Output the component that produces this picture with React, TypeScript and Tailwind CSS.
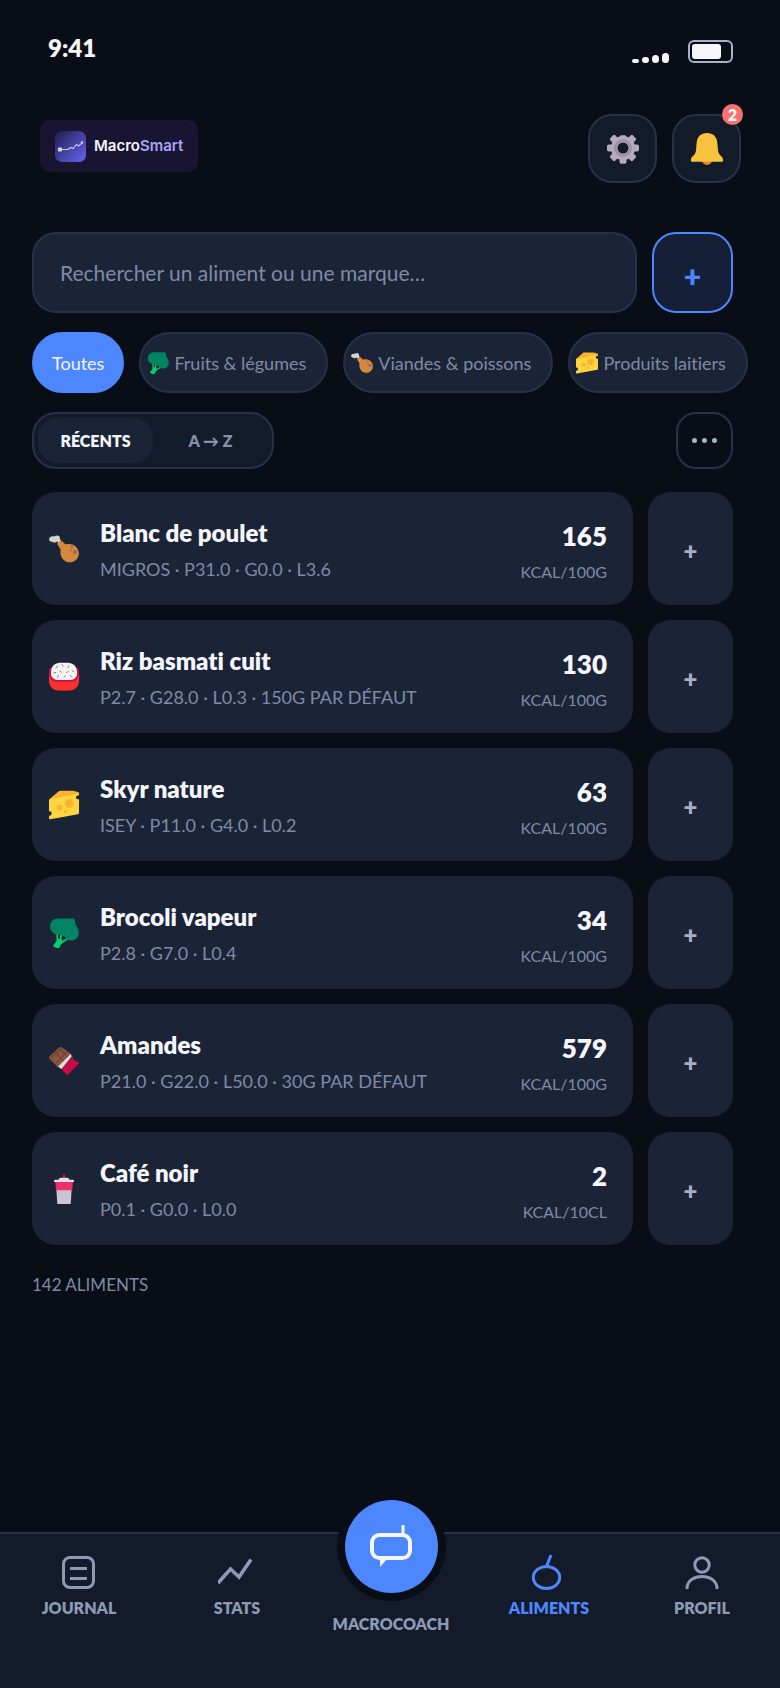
import { useState } from 'react'
import type { ReactNode } from 'react'

function GearIcon() {
  return (
    <svg viewBox="0 0 32 32" className="size-8" aria-hidden="true">
      <g fill="#b4acbc">
        <circle cx="16" cy="15" r="12" />
        <rect x="12.5" y="2.200" width="7" height="28.500" rx="1.8" />
        {[45, 90, 135].map((deg) => (
          <rect
            key={deg}
            x="12.5"
            y="-1"
            width="7"
            height="32"
            rx="1.8"
            transform={`rotate(${deg} 16 15)`}
          />
        ))}
      </g>
      <circle cx="16" cy="15" r="7.600" fill="#b4acbc" stroke="#998ea4" strokeWidth="2.400" />
      <circle cx="16" cy="15" r="5.500" fill="#131a29" />
    </svg>
  )
}

function BellIcon() {
  return (
    <svg viewBox="0 0 32 32" className="size-8" aria-hidden="true">
      <path d="M11 27a5 5 0 0 0 10 0z" fill="#f3802b" />
      <path
        d="M16 0c-6 0-9.800 3.600-10.300 9.500L5 17c-.2 2.600-1 4.200-2.700 5.700C.8 24 0 25 0 26.400V28c0 .5.4.8.9.8h30.200c.5 0 .9-.3.900-.8v-1.600c0-1.400-.8-2.400-2.300-3.700C28 21.200 27.200 19.600 27 17l-.7-7.500C25.800 3.600 22 0 16 0z"
        fill="#f9c23c"
      />
    </svg>
  )
}

function Chicken() {
  return (
    <svg viewBox="0 0 30 30" className="size-full" aria-hidden="true">
      <path d="M5 3.500l5 6 2-1.800-2-5z" fill="#e6e6e6" />
      <path
        d="M10.200 2.300C8.800 1 6.500 1.300 5.300 2.500 3 1.700.2 3.200.1 5.200c0 1.700 1.700 2.900 3.300 2.500 1.300 1.200 3.500 1.100 4.600-.2l2.200-2.400c.7-1 .8-2.100 0-2.800z"
        fill="#d3d3d3"
      />
      <path
        d="M8 9.400l3.700-3.300 5 4.300c3.300-1 7.300-.5 9.900 2 3.900 3.600 4.400 9.200 1.200 12.800-3.700 4.200-10 4-13.600.2-2.500-2.600-3.300-6.500-2.500-9.700z"
        fill="#d3883e"
      />
      <circle cx="26" cy="18" r="2.200" fill="#a56953" />
      <circle cx="22.900" cy="12.800" r="1.200" fill="#a56953" />
      <circle cx="21.900" cy="16.500" r=".9" fill="#a56953" />
    </svg>
  )
}

function Rice() {
  return (
    <svg viewBox="0 0 30 30" className="size-full" aria-hidden="true">
      <path d="M0 8.500C0 6 2 5 4 5h22c2 0 4 1 4 3.500V19c0 5-4 9.500-10 9.500H10C4 28.500 0 24 0 19z" fill="#ca0b4a" />
      <path d="M0 11c.5 6 3.500 8.500 8 8.500h14c4.500 0 7.500-2.500 8-8.500v7c0 6-4 10.500-10 10.500H10C4 28.500 0 24 0 18z" fill="#f8312f" />
      <path d="M2 10c0-5.500 4-9.300 9-9.300h8c5 0 9 3.800 9 9.300v1.500c0 4-3 6.500-7 6.500H9c-4 0-7-2.500-7-6.500z" fill="#f4f4f4" />
      <path
        d="M7 6l1.600-2M13 2.500l1 1.700M19 5.800l.8-1.900M4.500 11l2.200-.5M11 9l1.600 1.500M17.500 10.500l1.800-1M23 8.500l1.800 1.400M8.500 15.500l1-2M15 15l1.400-1.200M21.500 13.500l1.200 1.600"
        stroke="#8d8791"
        strokeWidth="1"
        strokeLinecap="round"
      />
    </svg>
  )
}

function Cheese() {
  return (
    <svg viewBox="0 0 30 30" className="size-full" aria-hidden="true">
      <path d="M0 9.500L9.500 1.500C10 1 10.600.8 11.300.8H24l5 1.200c.6.100 1 .6 1 1.200L8 10z" fill="#ffb02e" />
      <path
        d="M0 9.500L30 3v2.200c-1.900.2-3 1.100-3 2.200s1.100 1.900 3 1.800v13.600c0 .7-.4 1.200-1 1.400L1.500 29.200C.7 29.400 0 29 0 28.200v-2.400c1.700-.2 2.700-1.200 2.700-2.500S1.700 21.200 0 21.300z"
        fill="#fcd53f"
      />
      <circle cx="20.200" cy="13.500" r="4.400" fill="#ffb02e" />
      <circle cx="10.400" cy="17.500" r="2.700" fill="#ffb02e" />
      <circle cx="16.500" cy="21.500" r="1.400" fill="#ffb02e" />
    </svg>
  )
}

function Broccoli() {
  return (
    <svg viewBox="0 0 30 30" className="size-full" aria-hidden="true">
      <path
        d="M8.300 15v8.500M12.500 16l-2 8M19.500 20l-9 6"
        stroke="#00d26a"
        strokeWidth="1.700"
        fill="none"
      />
      <path d="M8 22.500c1-2 3.800-2 5.500-1l-.5 3-3 5.700c-.3.600-.9.700-1.400.5l-3.900-2c-.5-.3-.7-.8-.4-1.400z" fill="#00d26a" />
      <path
        d="M8.500.5h15.300c1 0 1.700.6 1.900 1.600l.9 5c2.100 2.200 3.300 4.800 3.200 8-.1 4.600-3.500 7.500-7.500 7.500-3.300 0-5.500-1.300-7-4.300-1.900 0-2.800-.3-3.800-1.700-5.700.7-10.400-2.500-10.400-8.100C1.100 3.900 4.400.5 8.500.5z"
        fill="#008463"
      />
    </svg>
  )
}

function Chocolate() {
  return (
    <svg viewBox="0 0 30 30" className="size-full" aria-hidden="true">
      <path d="M10 1.500c.5-.5 1.500-.8 2.500-.4L22 8 9 21.500.4 12.600c-.5-.5-.5-1.400 0-2z" fill="#8c5543" />
      <path d="M5.500 6l10 10M2 12L13 1.500M7 17L18 5.500M10.500 2.500l9 9" stroke="#6d4534" strokeWidth="1.100" fill="none" />
      <path d="M24.500 9.500l-1 3.500L30 16.700c.3.300.2.700-.1 1L19 28.600c-.4.400-1 .4-1.400 0l-5.300-5.300z" fill="#ca0b4a" />
      <path d="M21.800 7.800l.9 2.700L12.500 22.900 9 20.800z" fill="#e1dde3" />
    </svg>
  )
}

function Cup() {
  return (
    <svg viewBox="0 0 30 30" className="size-full" aria-hidden="true">
      <path d="M14 0h2v5h-2z" fill="#ca0b4a" />
      <path d="M7 8h16l-1.200 21c0 .6-.5 1-1.100 1H9.300c-.6 0-1.100-.4-1.100-1z" fill="#cdc4d6" />
      <path d="M6.300 8h17.600l-.6 8.200H7z" fill="#ec3067" />
      <path d="M11 3.800h8l1.500 2h3.200c.8 0 1.300.5 1.300 1.200v1H5V7c0-.7.500-1.200 1.300-1.200h3.200z" fill="#e4dfe9" />
    </svg>
  )
}

function PlusButton({ label }: { label: string }) {
  return (
    <button
      type="button"
      aria-label={label}
      className="w-[85px] shrink-0 rounded-[22px] bg-[#1b2436] pt-1 text-2xl font-extrabold text-[#a5afc4]"
    >
      +
    </button>
  )
}

const categories: { name: string; icon?: ReactNode }[] = [
  { name: 'Toutes' },
  { name: 'Fruits & légumes', icon: <Broccoli /> },
  { name: 'Viandes & poissons', icon: <Chicken /> },
  { name: 'Produits laitiers', icon: <Cheese /> },
]

const foods = [
  { name: 'Blanc de poulet', meta: 'MIGROS · P31.0 · G0.0 · L3.6', kcal: 165, unit: 'KCAL/100G', icon: <Chicken /> },
  { name: 'Riz basmati cuit', meta: 'P2.7 · G28.0 · L0.3 · 150G PAR DÉFAUT', kcal: 130, unit: 'KCAL/100G', icon: <Rice /> },
  { name: 'Skyr nature', meta: 'ISEY · P11.0 · G4.0 · L0.2', kcal: 63, unit: 'KCAL/100G', icon: <Cheese /> },
  { name: 'Brocoli vapeur', meta: 'P2.8 · G7.0 · L0.4', kcal: 34, unit: 'KCAL/100G', icon: <Broccoli /> },
  { name: 'Amandes', meta: 'P21.0 · G22.0 · L50.0 · 30G PAR DÉFAUT', kcal: 579, unit: 'KCAL/100G', icon: <Chocolate /> },
  { name: 'Café noir', meta: 'P0.1 · G0.0 · L0.0', kcal: 2, unit: 'KCAL/10CL', icon: <Cup /> },
]

function StatusBar() {
  return (
    <div className="flex h-24 items-center justify-between pr-[47px] pl-12">
      <span className="text-2xl font-extrabold">9:41</span>
      <div className="flex items-end gap-[19px] pt-[7px]">
        <div className="flex items-end gap-[3px]">
          <span className="h-1 w-[7px] rounded-sm bg-[#f4f6fc]" />
          <span className="h-1.5 w-[7px] rounded-sm bg-[#f4f6fc]" />
          <span className="h-2 w-[7px] rounded-sm bg-[#f4f6fc]" />
          <span className="h-2.5 w-[7px] rounded-sm bg-[#f4f6fc]" />
        </div>
        <div className="h-[23px] w-[45px] rounded-md border-2 border-[#a8b3c7] p-0.5">
          <div className="h-full w-[29px] rounded-[3px] bg-[#f4f6fc]" />
        </div>
      </div>
    </div>
  )
}

function Header() {
  return (
    <header className="flex items-start justify-between pt-[18px] pr-[39px] pl-10">
      <a
        href="#accueil"
        className="mt-1.5 flex h-[52px] items-center gap-2 rounded-[10px] bg-[#1a1433] px-[15px] font-['Inter',sans-serif] text-[15px] font-semibold"
      >
        <svg viewBox="0 0 31 31" className="size-[31px]" aria-hidden="true">
          <defs>
            <linearGradient id="logo" x1="0" y1="0" x2="1" y2="1">
              <stop offset="0" stopColor="#231b4d" />
              <stop offset="1" stopColor="#6366f1" />
            </linearGradient>
          </defs>
          <rect width="31" height="31" rx="7" fill="url(#logo)" />
          <rect x="3" y="16.500" width="4" height="4" rx="1" fill="#d6d6ee" />
          <path
            d="M6 18.500h7l2.500-2 2.500 1 3.500-4 2 1.500 3.500-3"
            fill="none"
            stroke="#c9c9ea"
            strokeWidth="1.100"
          />
          <circle cx="27" cy="11.500" r="1.200" fill="#d6d6ee" />
        </svg>
        <span>
          Macro<span className="text-[#a5a5f8]">Smart</span>
        </span>
      </a>
      <div className="flex gap-[15px]">
        <button
          type="button"
          aria-label="Réglages"
          className="flex size-[69px] items-center justify-center rounded-3xl border-2 border-[#26324b] bg-[#131a29]"
        >
          <GearIcon />
        </button>
        <button
          type="button"
          aria-label="Notifications"
          className="relative flex size-[69px] items-center justify-center rounded-3xl border-2 border-[#26324b] bg-[#131a29]"
        >
          <BellIcon />
          <span className="absolute -top-3 -right-1 flex size-[21px] items-center justify-center rounded-full bg-[#f87171] text-base leading-none font-extrabold">
            2
          </span>
        </button>
      </div>
    </header>
  )
}

function NavItem({
  label,
  active,
  children,
}: {
  label: string
  active?: boolean
  children: ReactNode
}) {
  return (
    <a
      href={'#' + label.toLowerCase()}
      className={
        'flex flex-col items-center gap-1 pt-5 text-base font-extrabold ' +
        (active ? 'text-[#4c87ff]' : 'text-[#8e9ab4]')
      }
    >
      <svg
        viewBox="0 0 38 38"
        className="size-[38px]"
        fill="none"
        stroke="currentColor"
        strokeWidth="3"
        aria-hidden="true"
      >
        {children}
      </svg>
      {label}
    </a>
  )
}

function BottomNav() {
  return (
    <nav className="mt-auto grid h-[156px] grid-cols-[158fr_158fr_150fr_166fr_140fr] items-start border-t-2 border-[#26324b] bg-[#131a29] pr-2">
      <NavItem label="JOURNAL">
        <rect x="3.500" y="3.500" width="30" height="30" rx="6.500" />
        <path d="M10 14.500h17M10 24.500h17" />
      </NavItem>
      <NavItem label="STATS">
        <path d="M0 29L12.500 15l8.500 8L33 5.500" strokeWidth="3.600" />
      </NavItem>
      <a
        href="#macrocoach"
        className="-mt-[42px] flex flex-col items-center gap-[11px] text-base font-extrabold text-[#8e9ab4]"
      >
        <span className="flex size-[109px] items-center justify-center rounded-full bg-[#090d15] p-2">
          <span className="flex size-full items-center justify-center rounded-full bg-[#4c87ff]">
            <svg viewBox="0 0 42 44" className="h-11 w-[42px]" fill="none" stroke="#f4f6fc" aria-hidden="true">
              <rect x="2" y="10" width="38" height="23" rx="7.500" strokeWidth="4" />
              <path d="M33 0v10" strokeWidth="3" />
              <path d="M10 34h7l-7 8z" fill="#f4f6fc" stroke="none" />
            </svg>
          </span>
        </span>
        MACROCOACH
      </a>
      <NavItem label="ALIMENTS" active>
        <ellipse cx="16.500" cy="23.500" rx="13.200" ry="11" />
        <path d="M16.500 12.500l4.500-11.500" />
      </NavItem>
      <NavItem label="PROFIL">
        <circle cx="19" cy="11" r="7.200" />
        <path d="M4 35v-1.500C4.800 26.500 11 22.500 19 22.500s14.200 4 15 11V35" />
      </NavItem>
    </nav>
  )
}

export default function App() {
  const [category, setCategory] = useState('Toutes')

  return (
    <div className="flex min-h-screen flex-col overflow-hidden bg-[#090d15] font-['Lato',sans-serif] text-[#f4f6fc] [font-variant-ligatures:none]">
      <StatusBar />
      <Header />

      <main className="pt-[49px] pr-[47px] pb-8 pl-8">
        <div className="flex gap-[15px]">
          <input
            type="search"
            aria-label="Rechercher un aliment"
            placeholder="Rechercher un aliment ou une marque…"
            className="h-[81px] min-w-0 flex-1 rounded-3xl border-2 border-[#26324b] bg-[#1b2436] px-[26px] text-[21px] outline-none placeholder:text-[#7f8aa5]"
          />
          <button
            type="button"
            aria-label="Ajouter un aliment"
            className="size-[81px] shrink-0 rounded-3xl border-2 border-[#4c87ff] bg-[#151f38] pt-1 text-3xl font-extrabold text-[#4c87ff]"
          >
            +
          </button>
        </div>

        <div className="-mr-9 mt-[19px] flex gap-[15px]">
          {categories.map((c) => (
            <button
              key={c.name}
              type="button"
              onClick={() => setCategory(c.name)}
              className={
                'flex h-[61px] shrink-0 items-center gap-[5px] rounded-full border-2 text-lg ' +
                (c.icon ? 'pr-5 pl-1.5 ' : 'px-[18px] ') +
                (category === c.name
                  ? 'border-[#4c87ff] bg-[#4c87ff]'
                  : 'border-[#26324b] bg-[#1b2436] text-[#7f8aa5]')
              }
            >
              {c.icon && <span className="size-[22px]">{c.icon}</span>}
              {c.name}
            </button>
          ))}
        </div>

        <div className="mt-[19px] flex items-center justify-between">
          <div className="flex h-[57px] rounded-3xl border-2 border-[#26324b] bg-[#131a29] p-1 text-base font-extrabold">
            <button type="button" className="w-[115px] rounded-[20px] bg-[#1b2436]">
              RÉCENTS
            </button>
            <button type="button" className="w-[115px] rounded-[20px] text-[#8591ab]">
              A → Z
            </button>
          </div>
          <button
            type="button"
            aria-label="Plus d’options"
            className="flex size-[57px] items-center justify-center gap-[5px] rounded-[20px] border-2 border-[#26324b]"
          >
            <span className="size-[5px] rounded-full bg-[#a8b3c7]" />
            <span className="size-[5px] rounded-full bg-[#a8b3c7]" />
            <span className="size-[5px] rounded-full bg-[#a8b3c7]" />
          </button>
        </div>

        <ul className="mt-[23px] flex flex-col gap-[15px]">
          {foods.map((f) => (
            <li key={f.name} className="flex gap-[15px]">
              <div className="flex h-[113px] min-w-0 flex-1 items-center rounded-3xl bg-[#1b2436] pr-[26px] pl-[17px]">
                <span className="size-[30px] shrink-0">{f.icon}</span>
                <div className="ml-[21px] min-w-0 flex-1">
                  <h2 className="text-2xl leading-8 font-extrabold">{f.name}</h2>
                  <p className="mt-2 text-lg leading-6 text-[#7f8aa5]">{f.meta}</p>
                </div>
                <div className="pt-1.5 text-right">
                  <p className="text-[26px] leading-8 font-extrabold">{f.kcal}</p>
                  <p className="mt-2 text-base leading-6 text-[#7f8aa5]">{f.unit}</p>
                </div>
              </div>
              <PlusButton label={`Ajouter ${f.name}`} />
            </li>
          ))}
        </ul>

        <p className="mt-7 text-[17px] leading-6 text-[#7f8aa5]">142 ALIMENTS</p>
      </main>

      <BottomNav />
    </div>
  )
}
